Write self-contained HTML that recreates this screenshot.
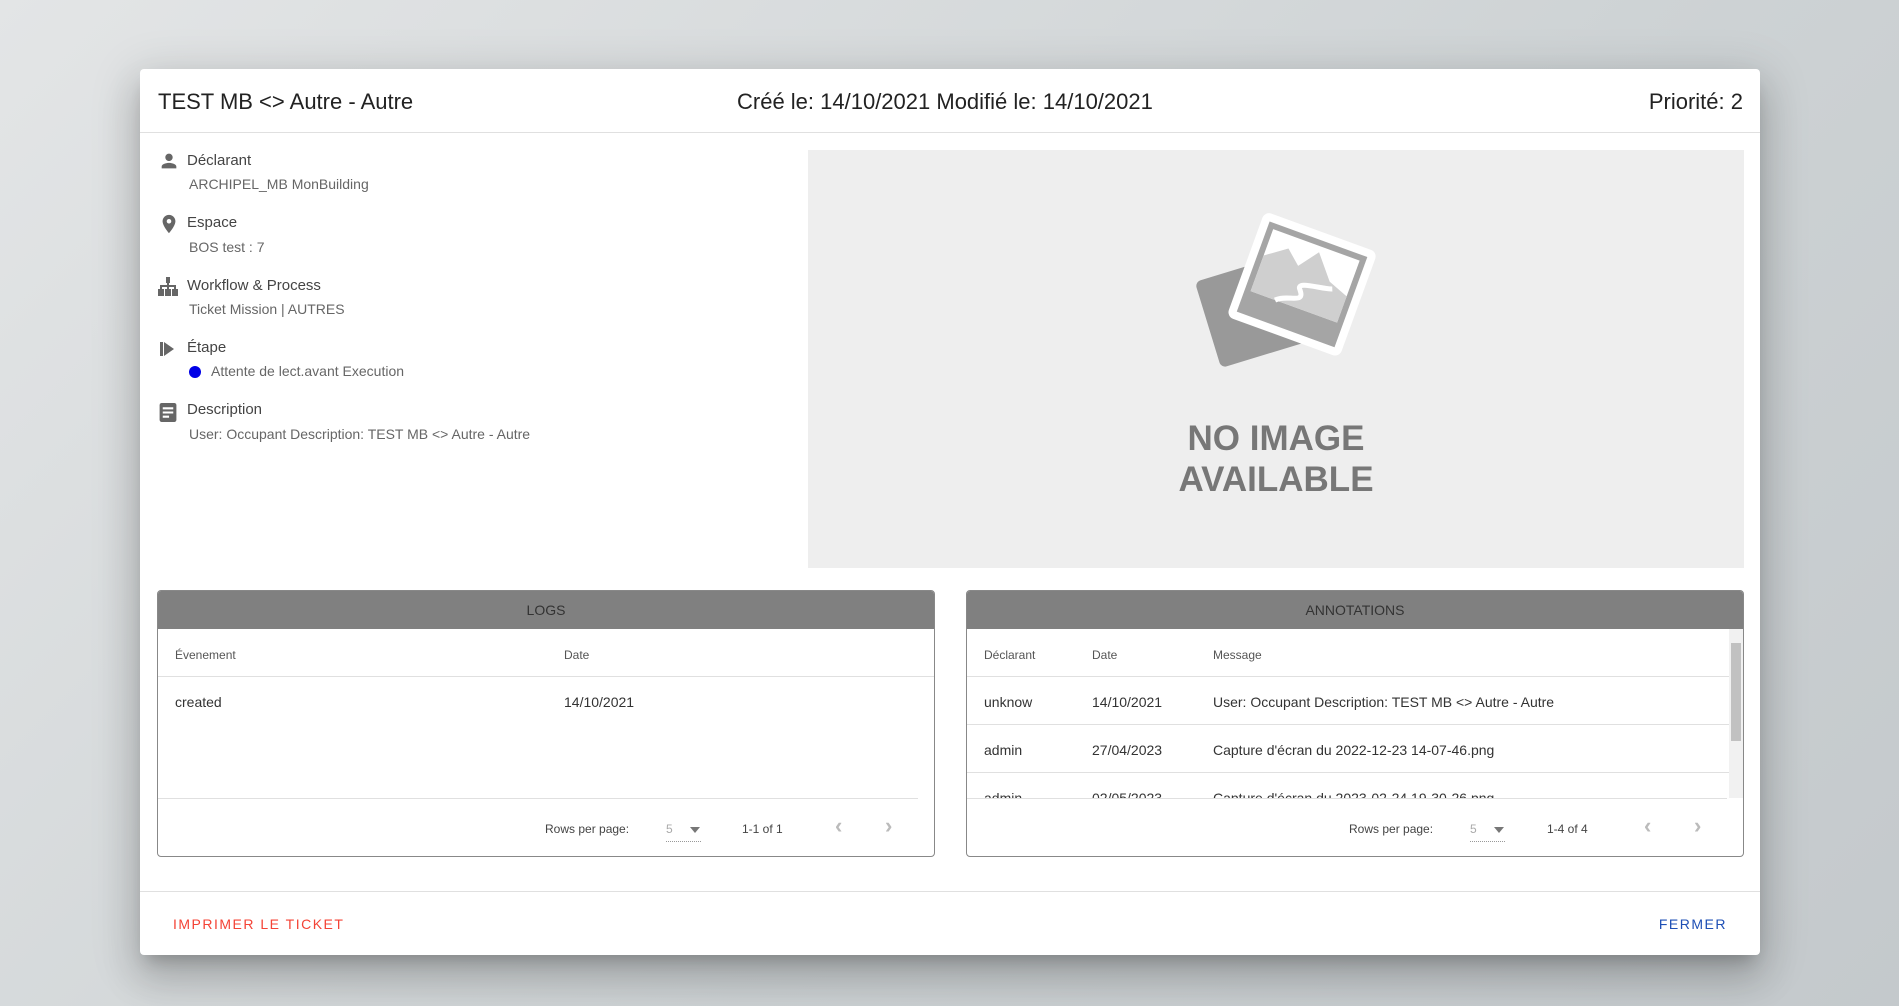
<!DOCTYPE html>
<html><head><meta charset="utf-8"><style>
*{margin:0;padding:0;box-sizing:border-box}
body{width:1899px;height:1006px;overflow:hidden;background:linear-gradient(135deg,#e3e5e6 0%,#cdd2d4 60%,#c4c9cc 100%);font-family:"Liberation Sans",sans-serif;color:#333;position:relative}
.dlg{position:absolute;left:140px;top:69px;width:1620px;height:886px;background:#fff;border-radius:4px;box-shadow:0 11px 15px -7px rgba(0,0,0,.2),0 24px 38px 3px rgba(0,0,0,.14),0 9px 46px 8px rgba(0,0,0,.12)}
.a{position:absolute;white-space:nowrap}
.hdr{font-size:22px;color:#222;top:20px}
.lbl{font-size:15px;color:#444;left:47px}
.val{font-size:14px;color:#666;left:49px}
.ic{position:absolute;left:18px}
.panel{position:absolute;border:1px solid #888;border-radius:4px;overflow:hidden;background:#fff}
.ph{height:38px;background:#808080;text-align:center;line-height:38px;font-size:14px;color:#333}
.th{font-size:12px;color:#555}
.td{font-size:14px;color:#333}
.hl{position:absolute;height:1px;background:#e0e0e0}
.pg{font-size:12px;color:#444}
.ar{position:absolute;color:#bbb;font-size:22px;font-weight:bold}
</style></head><body>
<div class="dlg">
 <div class="a hdr" style="left:18px">TEST MB &lt;&gt; Autre - Autre</div>
 <div class="a hdr" style="left:597px">Créé le: 14/10/2021 Modifié le: 14/10/2021</div>
 <div class="a hdr" style="right:17px">Priorité: 2</div>
 <div class="hl" style="left:0;right:0;top:63px"></div>

 <svg class="ic" style="top:81px" width="22" height="22" viewBox="0 0 24 24"><path fill="#666" d="M12 12c2.2 0 4-1.8 4-4s-1.8-4-4-4-4 1.8-4 4 1.8 4 4 4zm0 2c-2.7 0-8 1.3-8 4v2h16v-2c0-2.7-5.3-4-8-4z"/></svg>
 <div class="a lbl" style="top:83px">Déclarant</div>
 <div class="a val" style="top:107px">ARCHIPEL_MB MonBuilding</div>

 <svg class="ic" style="top:143px" width="22" height="24" viewBox="0 0 24 24"><path fill="#666" d="M12 2C8.1 2 5 5.1 5 9c0 5.2 7 13 7 13s7-7.8 7-13c0-3.9-3.1-7-7-7zm0 9.5c-1.4 0-2.5-1.1-2.5-2.5S10.6 6.5 12 6.5s2.5 1.1 2.5 2.5-1.1 2.5-2.5 2.5z"/></svg>
 <div class="a lbl" style="top:145px">Espace</div>
 <div class="a val" style="top:170px">BOS test : 7</div>

 <svg class="ic" style="top:208px;left:17px" width="22" height="20" viewBox="0 0 22 20"><path fill="#666" d="M9 0h4v6h-4zM10 6h2v3h-2zM3 8h16v2H3zM3 9h2v3H3zM10 9h2v3h-2zM17 9h2v3h-2zM1 12h6v7H1zM8 12h6v7H8zM15 12h6v7h-6z"/></svg>
 <div class="a lbl" style="top:208px">Workflow &amp; Process</div>
 <div class="a val" style="top:232px">Ticket Mission | AUTRES</div>

 <svg class="ic" style="top:271px" width="18" height="18" viewBox="0 0 18 18"><path fill="#666" d="M2 2h3v14H2zM6 2l10 7-10 7z"/></svg>
 <div class="a lbl" style="top:270px">Étape</div>
 <div style="position:absolute;left:49px;top:297px;width:12px;height:12px;border-radius:50%;background:#0000e6"></div>
 <div class="a val" style="left:71px;top:294px">Attente de lect.avant Execution</div>

 <svg class="ic" style="top:333px" width="20" height="21" viewBox="0 0 18 20"><rect x="1" y="1" width="16" height="18" rx="2" fill="#666"/><path fill="#fff" d="M4 5h10v2H4zM4 9h10v2H4zM4 13h6v2H4z"/></svg>
 <div class="a lbl" style="top:332px">Description</div>
 <div class="a val" style="top:357px">User: Occupant Description: TEST MB &lt;&gt; Autre - Autre</div>

 <div style="position:absolute;left:668px;top:81px;width:936px;height:418px;background:#eeeeee">
  <svg style="position:absolute;left:372px;top:60px" width="200" height="160" viewBox="0 0 200 160">
   <g transform="rotate(-17 60 100)"><rect x="25" y="60" width="100" height="90" rx="6" fill="#999"/></g>
   <g transform="rotate(20 120 80)"><rect x="60" y="18" width="120" height="112" rx="7" fill="#fff"/><rect x="68" y="26" width="104" height="96" fill="#a5a5a5"/><rect x="74" y="32" width="92" height="66" fill="#fff"/><path d="M74 98 L74 60 L95 45 L110 58 L125 38 L145 62 L166 70 L166 98Z" fill="#cfcfcf"/><path d="M100 98 C110 88,130 92,120 80 C112 72,140 72,150 68" stroke="#fff" stroke-width="5" fill="none"/></g>
  </svg>
  <div style="position:absolute;left:0;right:0;top:268px;text-align:center;font-weight:bold;font-size:35px;line-height:41px;color:#777">NO IMAGE<br>AVAILABLE</div>
 </div>

 <div class="panel" style="left:17px;top:521px;width:778px;height:267px">
  <div class="ph">LOGS</div>
  <div class="a th" style="left:17px;top:57px">Évenement</div>
  <div class="a th" style="left:406px;top:57px">Date</div>
  <div class="hl" style="left:0;right:0;top:85px"></div>
  <div class="a td" style="left:17px;top:103px">created</div>
  <div class="a td" style="left:406px;top:103px">14/10/2021</div>
  <div class="hl" style="left:0;right:16px;top:207px"></div>
  <div class="a pg" style="left:387px;top:231px">Rows per page:</div>
  <div class="a pg" style="left:508px;top:231px;color:#aaa;border-bottom:1px dotted #999;padding-right:28px;padding-bottom:5px">5</div>
  <div style="position:absolute;left:532px;top:236px;border:5px solid transparent;border-top:6px solid #777"></div>
  <div class="a pg" style="left:584px;top:231px">1-1 of 1</div>
  <div class="ar" style="left:677px;top:222px">‹</div>
  <div class="ar" style="left:727px;top:222px">›</div>
 </div>

 <div class="panel" style="left:826px;top:521px;width:778px;height:267px">
  <div class="ph">ANNOTATIONS</div>
  <div class="a th" style="left:17px;top:57px">Déclarant</div>
  <div class="a th" style="left:125px;top:57px">Date</div>
  <div class="a th" style="left:246px;top:57px">Message</div>
  <div class="hl" style="left:0;right:14px;top:85px"></div>
  <div class="a td" style="left:17px;top:103px">unknow</div>
  <div class="a td" style="left:125px;top:103px">14/10/2021</div>
  <div class="a td" style="left:246px;top:103px">User: Occupant Description: TEST MB &lt;&gt; Autre - Autre</div>
  <div class="hl" style="left:0;right:14px;top:133px"></div>
  <div class="a td" style="left:17px;top:151px">admin</div>
  <div class="a td" style="left:125px;top:151px">27/04/2023</div>
  <div class="a td" style="left:246px;top:151px">Capture d'écran du 2022-12-23 14-07-46.png</div>
  <div class="hl" style="left:0;right:14px;top:181px"></div>
  <div style="position:absolute;left:0;top:182px;right:14px;height:25px;overflow:hidden">
   <div class="a td" style="left:17px;top:17px">admin</div>
   <div class="a td" style="left:125px;top:17px">02/05/2023</div>
   <div class="a td" style="left:246px;top:17px">Capture d'écran du 2023-02-24 19-30-26.png</div>
  </div>
  <div style="position:absolute;right:0;top:38px;width:14px;height:169px;background:#f1f1f1"></div>
  <div style="position:absolute;right:2px;top:52px;width:10px;height:98px;background:#c1c1c1"></div>
  <div class="hl" style="left:0;right:16px;top:207px"></div>
  <div class="a pg" style="left:382px;top:231px">Rows per page:</div>
  <div class="a pg" style="left:503px;top:231px;color:#aaa;border-bottom:1px dotted #999;padding-right:28px;padding-bottom:5px">5</div>
  <div style="position:absolute;left:527px;top:236px;border:5px solid transparent;border-top:6px solid #777"></div>
  <div class="a pg" style="left:580px;top:231px">1-4 of 4</div>
  <div class="ar" style="left:677px;top:222px">‹</div>
  <div class="ar" style="left:727px;top:222px">›</div>
 </div>

 <div class="hl" style="left:0;right:0;top:822px"></div>
 <div class="a" style="left:33px;top:847px;font-size:14px;letter-spacing:1.5px;color:#f44336">IMPRIMER LE TICKET</div>
 <div class="a" style="right:33px;top:847px;font-size:14px;letter-spacing:1.5px;color:#1e4fb5">FERMER</div>
</div>
</body></html>
